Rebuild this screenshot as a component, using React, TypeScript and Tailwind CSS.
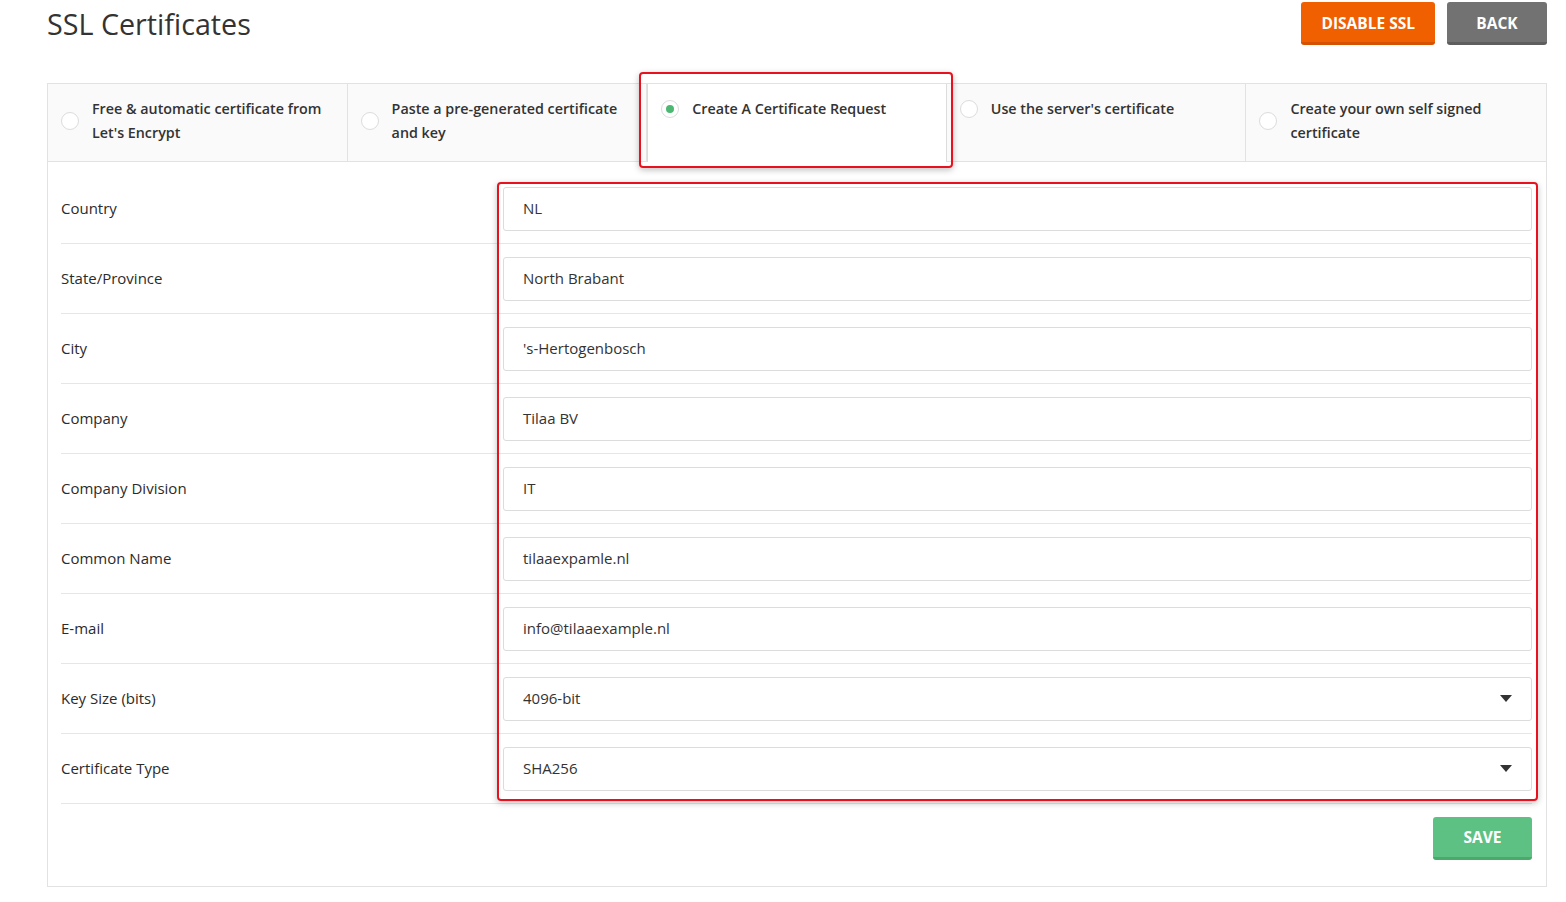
import React from 'react';

const tabs = [
  { key: 'le', text: "Free & automatic certificate from Let's Encrypt" },
  { key: 'paste', text: 'Paste a pre-generated certificate and key' },
  { key: 'csr', text: 'Create A Certificate Request' },
  { key: 'server', text: "Use the server's certificate" },
  { key: 'self', text: 'Create your own self signed certificate' },
];

const fields = [
  { label: 'Country', value: 'NL' },
  { label: 'State/Province', value: 'North Brabant' },
  { label: 'City', value: "'s-Hertogenbosch" },
  { label: 'Company', value: 'Tilaa BV' },
  { label: 'Company Division', value: 'IT' },
  { label: 'Common Name', value: 'tilaaexpamle.nl' },
  { label: 'E-mail', value: 'info@tilaaexample.nl' },
  { label: 'Key Size (bits)', value: '4096-bit', select: true },
  { label: 'Certificate Type', value: 'SHA256', select: true },
];

function Radio({ checked }: { checked?: boolean }) {
  return (
    <span className="flex h-[18px] w-[18px] shrink-0 items-center justify-center rounded-full border border-[#dcdcdc] bg-white">
      {checked && <span className="h-[8px] w-[8px] rounded-full bg-[#4cb872]" />}
    </span>
  );
}

function Tab({ text, active }: { text: string; active?: boolean }) {
  return (
    <div
      className={
        active
          ? 'w-[300px] border-x border-[#dcdcdc] bg-white px-[13px] pt-[13px]'
          : 'w-[300px] border-b border-r border-[#e2e2e2] bg-[#fafafa] px-[13px] pt-[13px] last:border-r-0'
      }
    >
      <div className="flex items-center gap-[13px]">
        <Radio checked={active} />
        <span className="pr-[4px] text-[14.3px] font-semibold leading-[24px] text-[#333]">{text}</span>
      </div>
    </div>
  );
}

function Field({ label, value, select }: { label: string; value: string; select?: boolean }) {
  return (
    <div className="flex h-[70px] items-center border-b border-[#e6e6e6]">
      <div className="w-[442px] text-[15px] font-medium text-[#2b2b2b]">{label}</div>
      <div className="flex h-[44px] flex-1 items-center justify-between rounded-[3px] border border-[#dcdcdc] bg-white pl-[19px] pr-[19px]">
        <span className="text-[15px] text-[#333]">{value}</span>
        {select && (
          <svg width="12" height="7" viewBox="0 0 12 7">
            <path d="M0 0h12L6 7z" fill="#333" />
          </svg>
        )}
      </div>
    </div>
  );
}

export default function App() {
  return (
    <div className="relative min-h-screen bg-white font-['Open_Sans',sans-serif]">
      <div className="pl-[47px] pr-[19px] pt-[2px]">
        <div className="flex items-start justify-between">
          <h1 className="mt-[3px] text-[28.7px] leading-[38px] text-[#333]">SSL Certificates</h1>
          <div className="flex gap-[12px]">
            <button className="h-[43px] rounded-[3px] border-b-[3px] border-[#d45200] bg-[#f06000] px-[20px] pt-[3px] text-[15.5px] font-bold text-white">
              DISABLE SSL
            </button>
            <button className="h-[43px] w-[100px] rounded-[3px] border-b-[3px] border-[#5e5e5e] bg-[#727272] pt-[3px] text-[15.5px] font-bold text-white">
              BACK
            </button>
          </div>
        </div>

        <div className="mt-[38px] w-[1500px] border border-[#e2e2e2]">
          <div className="flex h-[78px]">
            {tabs.map((t) => (
              <Tab key={t.key} text={t.text} active={t.key === 'csr'} />
            ))}
          </div>
          <div className="pl-[13px] pr-[14px] pt-[12px]">
            {fields.map((f) => (
              <Field key={f.label} label={f.label} value={f.value} select={f.select} />
            ))}
            <div className="flex justify-end pb-[26px] pt-[13px]">
              <button className="h-[43px] w-[99px] rounded-[3px] border-b-[3px] border-[#4aaa6c] bg-[#5ec184] pt-[2px] text-[15.5px] font-bold text-white">
                SAVE
              </button>
            </div>
          </div>
        </div>
      </div>

      {/* annotation boxes */}
      <div className="pointer-events-none absolute left-[639px] top-[72px] h-[96px] w-[314px] rounded-[4px] border-2 border-[#e8121f] shadow-[0_2px_6px_rgba(0,0,0,0.25)]" />
      <div className="pointer-events-none absolute left-[497px] top-[182px] h-[619px] w-[1041px] rounded-[4px] border-2 border-[#e8121f] shadow-[0_2px_6px_rgba(0,0,0,0.25)]" />
    </div>
  );
}
